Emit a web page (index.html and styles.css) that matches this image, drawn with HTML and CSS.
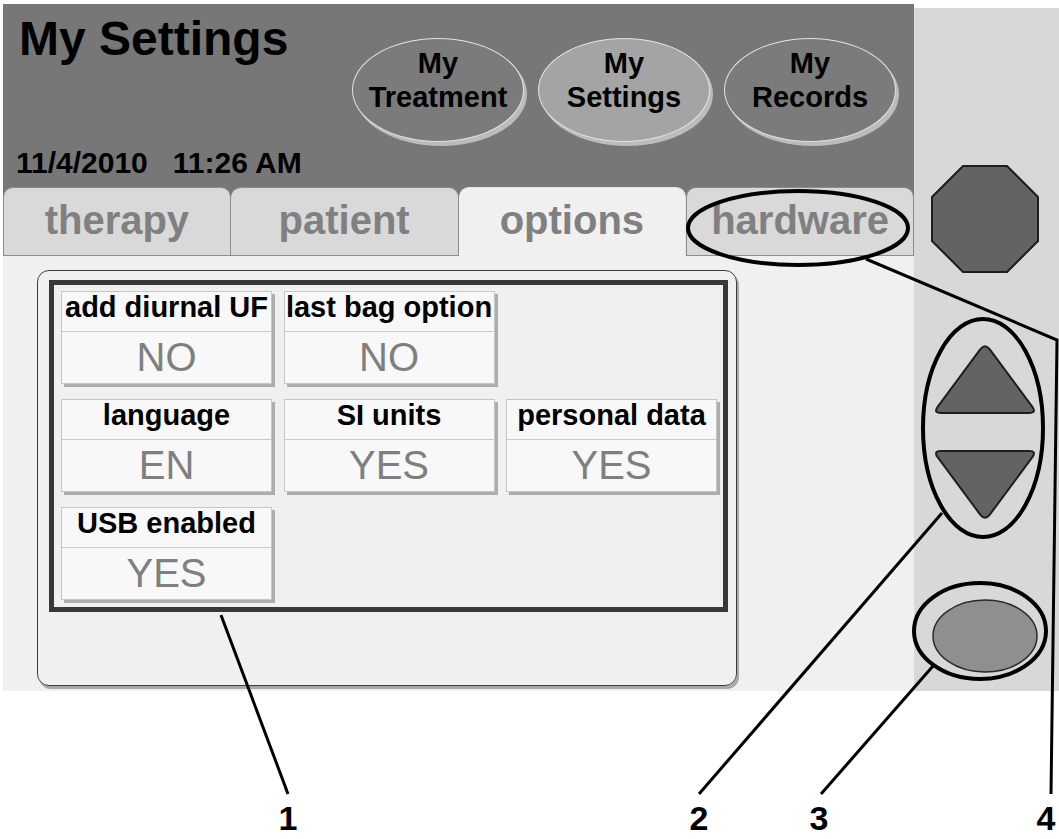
FILE: index.html
```html
<!DOCTYPE html>
<html lang="en">
<head>
    <meta charset="UTF-8">
    <title>My Settings</title>
    <link rel="stylesheet" href="styles.css">
</head>
<body>
    <div class="device">
        <div class="screen">
            <header class="topbar">
                <div class="head-left">
                    <h1 class="title">My Settings</h1>
                    <div class="clock"><span>11/4/2010</span><span class="time">11:26 AM</span></div>
                </div>
                <nav class="menu">
                    <div class="pill"><span>My</span><span>Treatment</span></div>
                    <div class="pill current"><span>My</span><span>Settings</span></div>
                    <div class="pill"><span>My</span><span>Records</span></div>
                </nav>
            </header>

            <div class="tabs">
                <div class="tab">therapy</div>
                <div class="tab">patient</div>
                <div class="tab active">options</div>
                <div class="tab">hardware</div>
            </div>

            <main class="content">
                <div class="panel">
                    <div class="group">
                        <div class="cell">
                            <div class="cell-label">add diurnal UF</div>
                            <div class="cell-value">NO</div>
                        </div>
                        <div class="cell">
                            <div class="cell-label">last bag option</div>
                            <div class="cell-value">NO</div>
                        </div>
                        <div class="cell newrow">
                            <div class="cell-label">language</div>
                            <div class="cell-value">EN</div>
                        </div>
                        <div class="cell">
                            <div class="cell-label">SI units</div>
                            <div class="cell-value">YES</div>
                        </div>
                        <div class="cell">
                            <div class="cell-label">personal data</div>
                            <div class="cell-value">YES</div>
                        </div>
                        <div class="cell newrow">
                            <div class="cell-label">USB enabled</div>
                            <div class="cell-value">YES</div>
                        </div>
                    </div>
                </div>
            </main>
        </div>

        <aside class="keys">
            <!-- stop key -->
            <svg class="key-stop" width="108" height="108" viewBox="-1 -1 108 108">
                <polygon points="31,0 75,0 106,31 106,75 75,106 31,106 0,75 0,31" fill="#636363" stroke="#1e1e1e" stroke-width="2"/>
            </svg>
            <!-- arrow keys -->
            <svg class="key-up" width="108" height="74" viewBox="-2 -2 108 74">
                <path d="M47.2,6.4 Q52,0 56.8,6.4 L99.2,63.6 Q104,70 96,70 L8,70 Q0,70 4.8,63.6 Z" fill="#636363" stroke="#1e1e1e" stroke-width="2"/>
            </svg>
            <svg class="key-down" width="108" height="74" viewBox="-2 -2 108 74">
                <path d="M47.2,63.6 Q52,70 56.8,63.6 L99.2,6.4 Q104,0 96,0 L8,0 Q0,0 4.8,6.4 Z" fill="#636363" stroke="#1e1e1e" stroke-width="2"/>
            </svg>
            <!-- ok key -->
            <svg class="key-ok" width="108" height="76" viewBox="0 0 108 76">
                <ellipse cx="54" cy="38" rx="52" ry="36" fill="#8f8f8f" stroke="#2a2a2a" stroke-width="1.5"/>
            </svg>
        </aside>
    </div>

    <!-- callout marks drawn over the screenshot -->
    <svg class="callouts" width="1059" height="839" viewBox="0 0 1059 839">
        <g fill="none" stroke="#000" stroke-width="4">
            <ellipse cx="798" cy="228" rx="110" ry="37"/>
            <ellipse cx="983" cy="428" rx="60" ry="109"/>
            <ellipse cx="980" cy="631" rx="66" ry="48"/>
        </g>
        <g fill="none" stroke="#000" stroke-width="3">
            <polyline points="866,259 1057,340 1051,794"/>
            <line x1="221" y1="615" x2="288" y2="794"/>
            <line x1="942" y1="513" x2="699" y2="794"/>
            <line x1="933" y1="666" x2="821" y2="794"/>
        </g>
        <g class="callout-num">
            <text x="288" y="830">1</text>
            <text x="699" y="830">2</text>
            <text x="819" y="830">3</text>
            <text x="1046" y="830">4</text>
        </g>
    </svg>
</body>
</html>
```

FILE: styles.css
```css
/* General Styles */
body {
    margin: 0;
    padding: 0;
    width: 1059px;
    height: 839px;
    position: relative;
    overflow: hidden;
    background-color: #ffffff;
    font-family: 'Liberation Sans', Arial, sans-serif;
    color: #000;
}

.device {
    display: flex;
    align-items: flex-start;
}

.screen {
    width: 911px;
    margin: 4px 0 0 3px;
}

/* Header */
.topbar {
    display: flex;
    height: 183px;
    box-sizing: border-box;
    padding: 11px 0 9px 15px;
    background-color: #777777;
}

.head-left {
    width: 334px;
    display: flex;
    flex-direction: column;
    justify-content: space-between;
}

.title {
    margin: 0 0 0 1px;
    font-size: 48px;
    line-height: 48px;
    font-weight: bold;
}

.clock {
    margin-left: -2px;
    font-size: 30px;
    line-height: 30px;
    font-weight: bold;
}

.clock .time {
    margin-left: 25px;
}

.menu {
    display: flex;
    gap: 14px;
    margin-top: 23px;
    align-items: flex-start;
}

.pill {
    width: 172px;
    height: 104px;
    box-sizing: border-box;
    border-radius: 50%;
    border: 1px solid #e2e2e2;
    background-color: #7b7b7b;
    box-shadow: 3px 4px 0 #bcbcbc;
    display: flex;
    flex-direction: column;
    align-items: center;
    justify-content: center;
    padding-bottom: 20px;
    font-size: 29px;
    line-height: 34px;
    font-weight: bold;
}

.pill.current {
    background-color: #a4a4a4;
}

/* Tabs */
.tabs {
    display: grid;
    grid-template-columns: repeat(4, 1fr);
    height: 69px;
    background-color: #777777;
}

.tab {
    box-sizing: border-box;
    border: 1px solid #8c8c8c;
    border-radius: 10px 10px 0 0;
    background-color: #d9d9d9;
    color: #808080;
    font-size: 40px;
    font-weight: bold;
    line-height: 64px;
    text-align: center;
}

.tab + .tab {
    border-left: none;
}

.tab.active {
    background-color: #f0f0f0;
    border-color: #e6e6e6;
    border-bottom-color: #f0f0f0;
}

.tab.active + .tab {
    border-left: 1px solid #8c8c8c;
}

/* Content */
.content {
    display: block;
    height: 435px;
    box-sizing: border-box;
    padding: 14px 0 0 34px;
    background-color: #f0f0f0;
}

.panel {
    width: 700px;
    height: 416px;
    box-sizing: border-box;
    padding: 9px 0 0 11px;
    border: 1px solid #3c3c3c;
    border-radius: 12px;
    box-shadow: 2px 3px 0 #a8a8a8;
}

.group {
    width: 679px;
    height: 332px;
    box-sizing: border-box;
    padding: 6px 0 0 7px;
    border: 5px solid #383838;
    display: grid;
    grid-template-columns: repeat(3, 211px);
    column-gap: 11.5px;
    row-gap: 15px;
    align-content: start;
}

.cell {
    border: 1px solid #c6c6c6;
    background-color: #f8f8f8;
    box-shadow: 3px 3px 0 #adadad;
    text-align: center;
}

.cell.newrow {
    grid-column: 1;
}

.cell-label {
    font-size: 29px;
    font-weight: bold;
    line-height: 30px;
    padding-bottom: 9px;
    border-bottom: 1px solid #c9c9c9;
    white-space: nowrap;
}

.cell-value {
    font-size: 40px;
    line-height: 51px;
    color: #7f7f7f;
}

/* Hardware keys */
.keys {
    width: 145px;
    height: 683px;
    margin-top: 8px;
    box-sizing: border-box;
    padding: 157px 3px 0 0;
    background-color: #d8d8d8;
    display: flex;
    flex-direction: column;
    align-items: center;
}

.keys svg {
    display: block;
}

.key-up {
    margin-top: 68px;
}

.key-down {
    margin-top: 34px;
}

.key-ok {
    margin-top: 75px;
}

/* Callouts */
.callouts {
    position: absolute;
    top: 0;
    left: 0;
    pointer-events: none;
}

.callout-num text {
    font-family: 'Liberation Sans', Arial, sans-serif;
    font-size: 34px;
    font-weight: bold;
    text-anchor: middle;
    fill: #000;
}
```
